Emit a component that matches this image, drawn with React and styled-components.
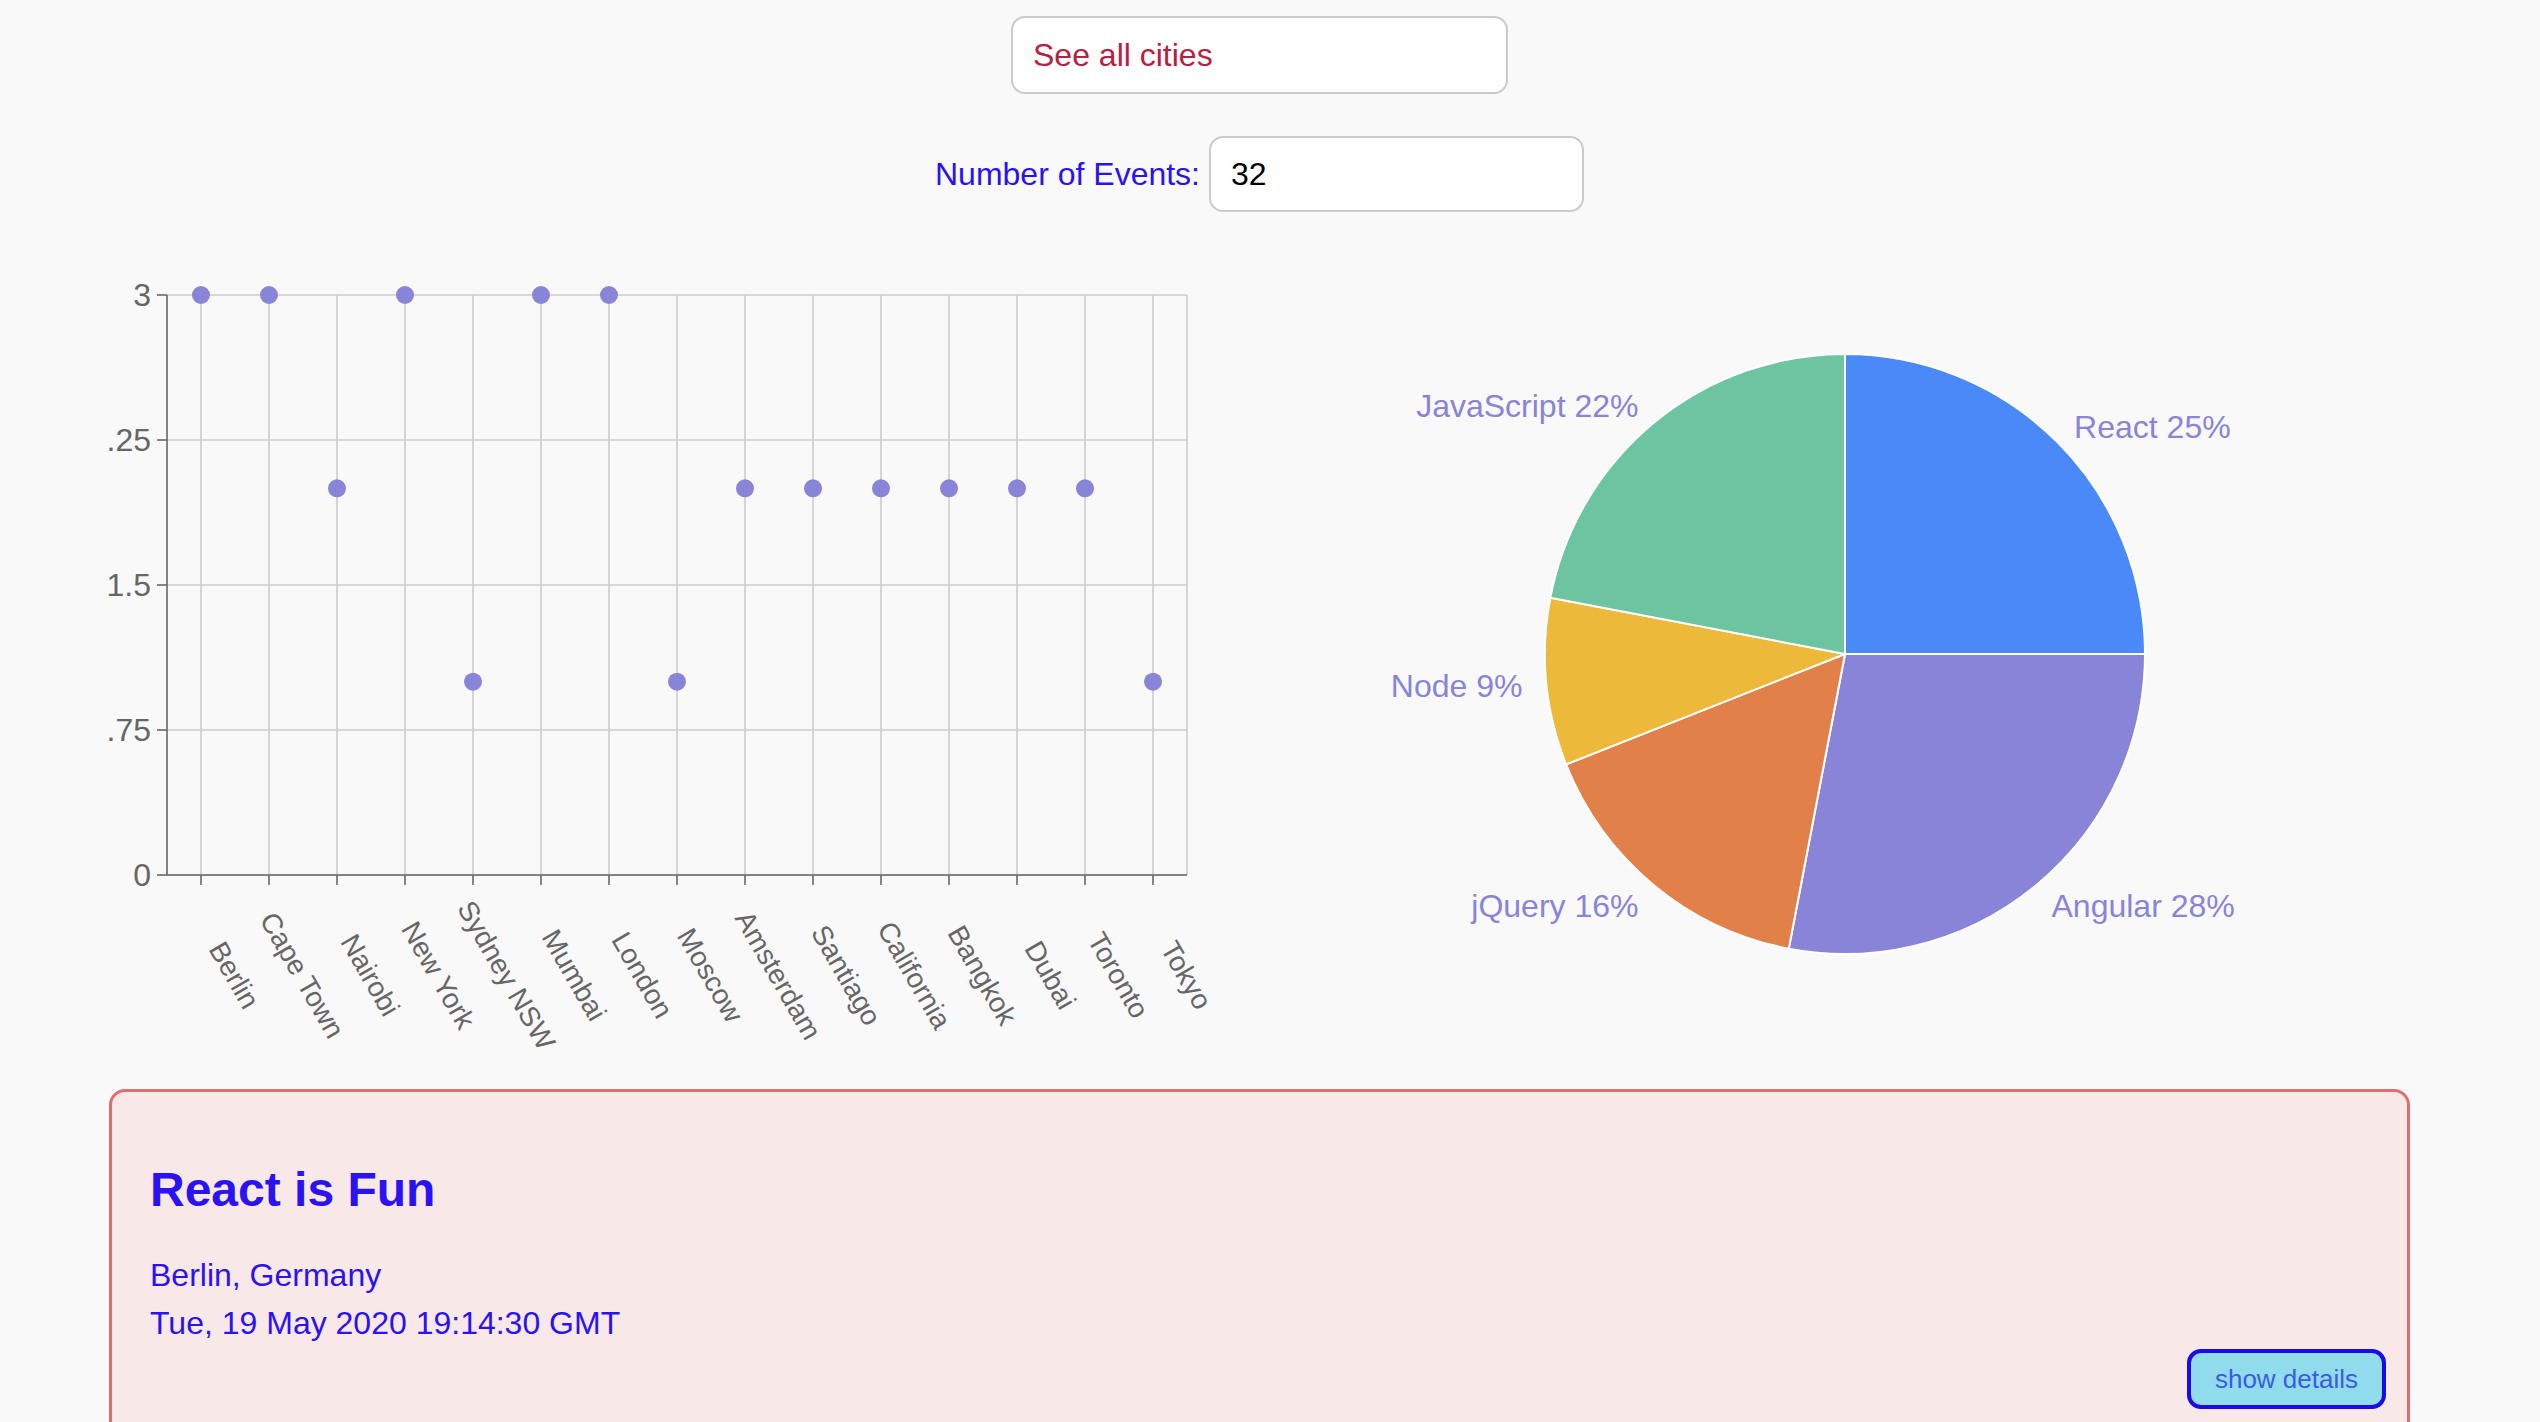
import React from 'react'
import styled, { createGlobalStyle } from 'styled-components'

const GlobalStyle = createGlobalStyle`
  html {
    overflow: hidden;
  }
  body {
    margin: 0;
    background: #f9f9f9;
    font-family: 'Liberation Sans', Arial, Helvetica, sans-serif;
  }
`

const Page = styled.div`
  display: flex;
  flex-direction: column;
  align-items: center;
  padding-right: 21px;
`

const CityInput = styled.input`
  box-sizing: border-box;
  margin-top: 16px;
  width: 497px;
  height: 78px;
  padding: 0 20px;
  border: 2px solid #cbcbcb;
  border-radius: 14px;
  background: #fff;
  font-family: inherit;
  font-size: 32px;
  color: #000;
  outline: none;

  &::placeholder {
    color: #b8203f;
  }
`

const EventsRow = styled.div`
  display: flex;
  align-items: center;
  gap: 9px;
  margin-top: 42px;
`

const EventsLabel = styled.label`
  font-size: 32px;
  color: #2a12f2;
`

const EventsInput = styled.input`
  box-sizing: border-box;
  width: 375px;
  height: 76px;
  padding: 0 20px;
  border: 2px solid #cbcbcb;
  border-radius: 14px;
  background: #fff;
  font-family: inherit;
  font-size: 32px;
  color: #000;
  outline: none;
`

const ChartsRow = styled.div`
  align-self: stretch;
  display: flex;
  gap: 98px;
  margin-top: 53px;
  padding-left: 107px;
`

const ChartSvg = styled.svg`
  display: block;
  flex: none;
  font-family: 'Liberation Sans', Arial, Helvetica, sans-serif;
`

const GridLine = styled.line`
  stroke: #cccccc;
  stroke-width: 1.6;
`

const AxisLine = styled.line`
  stroke: #666666;
  stroke-width: 1.6;
`

const TickLabel = styled.text`
  fill: #666666;
  font-size: ${({ size }) => size}px;
`

const Dot = styled.circle`
  fill: #8884d8;
`

const Slice = styled.path`
  stroke: #ffffff;
  stroke-width: 2;
`

const SliceLabel = styled.text`
  fill: #8884d8;
  font-size: 32px;
`

const EventCard = styled.div`
  box-sizing: border-box;
  width: 2301px;
  margin-top: 24px;
  padding: 70px 21px 30px 38px;
  border: 3px solid #e16d6d;
  border-radius: 16px;
  background: #f9e8e8;
  color: #2a12f2;
`

const EventTitle = styled.h2`
  margin: 0;
  font-size: 48px;
  font-weight: bold;
  line-height: normal;
`

const EventInfo = styled.p`
  margin: ${({ first }) => (first ? '34px 0 0' : '0')};
  font-size: 32px;
  line-height: 48px;
`

const CardFooter = styled.div`
  display: flex;
  justify-content: flex-end;
  margin-top: 2px;
`

const DetailsButton = styled.button`
  box-sizing: border-box;
  width: 199px;
  height: 60px;
  border: 4px solid #1a0ae8;
  border-radius: 14px;
  background: #90dcec;
  color: #3b5be0;
  font-family: inherit;
  font-size: 26px;
  cursor: pointer;
`

const cities = [
  ['Berlin', 3],
  ['Cape Town', 3],
  ['Nairobi', 2],
  ['New York', 3],
  ['Sydney NSW', 1],
  ['Mumbai', 3],
  ['London', 3],
  ['Moscow', 1],
  ['Amsterdam', 2],
  ['Santiago', 2],
  ['California', 2],
  ['Bangkok', 2],
  ['Dubai', 2],
  ['Toronto', 2],
  ['Tokyo', 1],
]

const genres = [
  { name: 'React', value: 25, color: '#4a89f8' },
  { name: 'Angular', value: 28, color: '#8884d8' },
  { name: 'jQuery', value: 16, color: '#e2804a' },
  { name: 'Node', value: 9, color: '#ecb93b' },
  { name: 'JavaScript', value: 22, color: '#6dc4a0' },
]

// plot area inside the scatter svg
const X0 = 60
const X1 = 1080
const Y0 = 30
const Y1 = 610
const BAND = (X1 - X0) / cities.length
const yTicks = [0, 0.75, 1.5, 2.25, 3]
const yPos = (v) => Y1 - (v / 3) * (Y1 - Y0)

const ScatterChart = () => (
  <ChartSvg width={1140} height={800}>
    {yTicks.map((t) => (
      <GridLine key={t} x1={X0} x2={X1} y1={yPos(t)} y2={yPos(t)} />
    ))}
    {cities.map((c, i) => {
      const x = X0 + BAND / 2 + BAND * i
      return <GridLine key={c[0]} x1={x} x2={x} y1={Y0} y2={Y1} />
    })}
    <GridLine x1={X1} x2={X1} y1={Y0} y2={Y1} />

    <AxisLine x1={X0} x2={X0} y1={Y0} y2={Y1} />
    {yTicks.map((t) => (
      <g key={t}>
        <AxisLine x1={X0 - 10} x2={X0} y1={yPos(t)} y2={yPos(t)} />
        <TickLabel size={32} x={X0 - 16} y={yPos(t)} textAnchor="end" dominantBaseline="central">
          {t}
        </TickLabel>
      </g>
    ))}

    <AxisLine x1={X0} x2={X1} y1={Y1} y2={Y1} />
    {cities.map((c, i) => {
      const x = X0 + BAND / 2 + BAND * i
      const lx = x + 25
      const ly = 715
      return (
        <g key={c[0]}>
          <AxisLine x1={x} x2={x} y1={Y1} y2={Y1 + 10} />
          <TickLabel size={28} x={lx} y={ly} textAnchor="middle" transform={`rotate(60, ${lx}, ${ly})`}>
            {c[0]}
          </TickLabel>
        </g>
      )
    })}

    {cities.map((c, i) => (
      <Dot key={c[0]} cx={X0 + BAND / 2 + BAND * i} cy={yPos(c[1])} r={9} />
    ))}
  </ChartSvg>
)

const CX = 500
const CY = 389
const R = 300

const polar = (r, deg) => [CX + r * Math.cos((deg * Math.PI) / 180), CY + r * Math.sin((deg * Math.PI) / 180)]

const PieChart = () => {
  let angle = -90
  return (
    <ChartSvg width={1000} height={800}>
      {genres.map((g) => {
        const sweep = (g.value / 100) * 360
        const start = angle
        const end = angle + sweep
        angle = end
        const [sx, sy] = polar(R, start)
        const [ex, ey] = polar(R, end)
        const mid = start + sweep / 2
        const [lx, ly] = polar(324, mid)
        return (
          <g key={g.name}>
            <Slice
              d={`M ${CX} ${CY} L ${sx} ${sy} A ${R} ${R} 0 ${sweep > 180 ? 1 : 0} 1 ${ex} ${ey} Z`}
              fill={g.color}
            />
            <SliceLabel
              x={lx}
              y={ly + 2}
              textAnchor={lx > CX ? 'start' : 'end'}
              dominantBaseline="central"
            >
              {`${g.name} ${g.value}%`}
            </SliceLabel>
          </g>
        )
      })}
    </ChartSvg>
  )
}

const App = () => (
  <>
    <GlobalStyle />
    <Page>
      <CityInput type="text" placeholder="See all cities" />
      <EventsRow>
        <EventsLabel>Number of Events:</EventsLabel>
        <EventsInput type="text" defaultValue="32" />
      </EventsRow>

      <ChartsRow>
        <ScatterChart />
        <PieChart />
      </ChartsRow>

      <EventCard>
        <EventTitle>React is Fun</EventTitle>
        <EventInfo first>Berlin, Germany</EventInfo>
        <EventInfo>Tue, 19 May 2020 19:14:30 GMT</EventInfo>
        <CardFooter>
          <DetailsButton>show details</DetailsButton>
        </CardFooter>
      </EventCard>
    </Page>
  </>
)

export default App
